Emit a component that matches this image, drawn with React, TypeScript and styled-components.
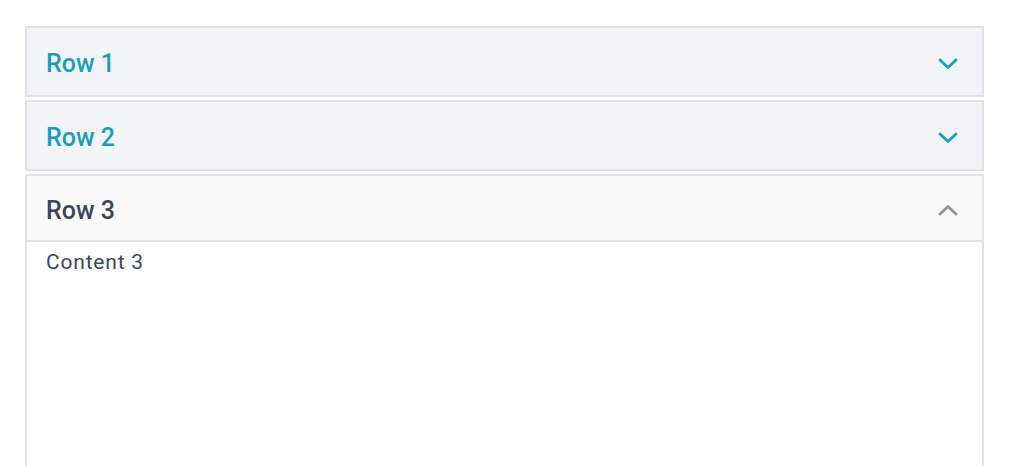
import React, { useState } from 'react';
import styled, { createGlobalStyle } from 'styled-components';

const GlobalStyle = createGlobalStyle`
  html, body {
    margin: 0;
    padding: 0;
    background: #ffffff;
    font-family: Roboto, "Liberation Sans", sans-serif;
  }
`;

const Page = styled.div`
  padding: 26px 28px 0 25px;
`;

const Accordion = styled.div`
  display: flex;
  flex-direction: column;
  gap: 3px;
`;

const Item = styled.div<{ $open: boolean }>`
  border: 2px solid #e1e3e6;
  border-bottom: ${p => (p.$open ? 'none' : '2px solid #e1e3e6')};
  background: #ffffff;
`;

const Header = styled.button<{ $open: boolean }>`
  display: flex;
  align-items: center;
  justify-content: space-between;
  width: 100%;
  height: ${p => (p.$open ? '66px' : '67px')};
  padding: 4px 24px 0 19px;
  border: none;
  border-bottom: ${p => (p.$open ? '2px solid #e1e3e6' : 'none')};
  background: ${p => (p.$open ? '#f9f9fa' : '#f3f4f8')};
  color: ${p => (p.$open ? '#3a4659' : '#1a9dbd')};
  font-family: Roboto, "Liberation Sans", sans-serif;
  font-size: 25px;
  font-weight: 500;
  cursor: pointer;
  text-align: left;
`;

const Chevron = styled.svg<{ $open: boolean }>`
  width: 20px;
  height: 12px;
  color: ${p => (p.$open ? '#8b94a3' : '#1a9dbd')};
`;

const Content = styled.div`
  padding: 7px 19px 0;
  height: 222px;
  color: #3d4657;
  font-size: 21px;
  letter-spacing: 0.8px;
  line-height: 26px;
`;

const rows = ['Row 1', 'Row 2', 'Row 3'];

export default function App() {
  const [open, setOpen] = useState(2);
  return (
    <Page>
      <GlobalStyle />
      <Accordion>
        {rows.map((label, i) => {
          const isOpen = open === i;
          return (
            <Item key={label} $open={isOpen}>
              <Header $open={isOpen} onClick={() => setOpen(isOpen ? -1 : i)}>
                {label}
                <Chevron $open={isOpen} viewBox="0 0 20 12" fill="none">
                  <path
                    d={isOpen ? 'M2 10l8-7.5 8 7.5' : 'M2 2l8 7.5 8-7.5'}
                    stroke="currentColor"
                    strokeWidth="2.8"
                    strokeLinecap="round"
                    strokeLinejoin="round"
                  />
                </Chevron>
              </Header>
              {isOpen && <Content>Content {i + 1}</Content>}
            </Item>
          );
        })}
      </Accordion>
    </Page>
  );
}
